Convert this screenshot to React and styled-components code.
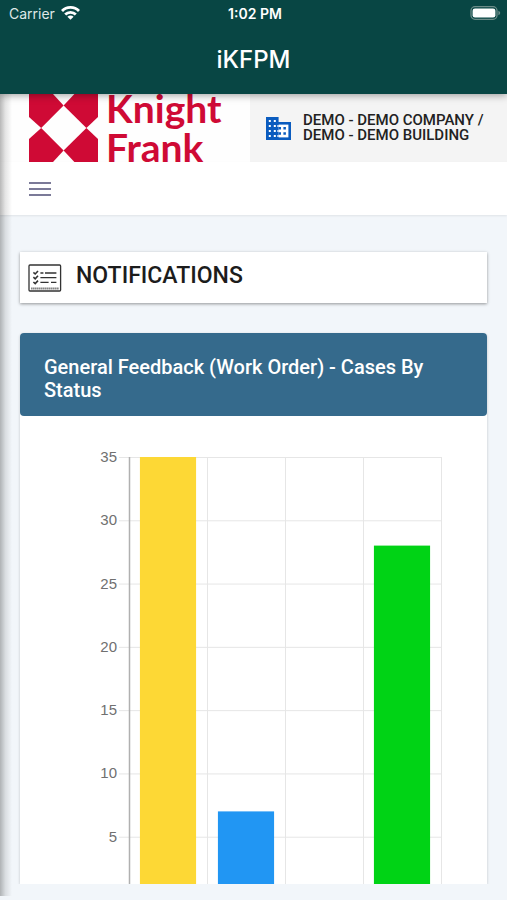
import React from 'react';
import styled, { createGlobalStyle } from 'styled-components';

const statusCases = [
  { id: 'open', value: 35, color: '#fdd835' },
  { id: 'in-progress', value: 7, color: '#2196f3' },
  { id: 'on-hold', value: 0, color: '#f44336' },
  { id: 'closed', value: 28, color: '#00d315' }
];

const ticks = [35, 30, 25, 20, 15, 10, 5];

// Chart geometry, in viewBox units
const CHART = { width: 419, height: 460, left: 85, right: 397, top: 16, bottom: 459, max: 35 };

const CasesChart = ({ data }) => {
  const step = (CHART.right - CHART.left) / data.length;
  const barWidth = step * 0.72;
  const yOf = (value) => CHART.bottom - (value / CHART.max) * (CHART.bottom - CHART.top);

  return (
    <ChartSvg viewBox={`0 0 ${CHART.width} ${CHART.height}`} role="img" aria-label="Cases by status">
      {ticks.map((tick) => (
        <g key={tick}>
          <line x1={CHART.left - 10} x2={CHART.right} y1={yOf(tick) + 0.5} y2={yOf(tick) + 0.5} stroke="#e6e6e6" />
          <text x={CHART.left - 12} y={yOf(tick) + 5} textAnchor="end">{tick}</text>
        </g>
      ))}
      {[...data, null].map((_, index) => (
        <line
          key={index}
          x1={CHART.left + step * index + 0.5}
          x2={CHART.left + step * index + 0.5}
          y1={CHART.top}
          y2={CHART.bottom}
          stroke={index === 0 ? '#b0b0b0' : '#e6e6e6'}
          strokeWidth={index === 0 ? 1.5 : 1}
        />
      ))}
      {data.map((item, index) => (
        <rect
          key={item.id}
          x={CHART.left + step * index + (step - barWidth) / 2}
          y={yOf(item.value)}
          width={barWidth}
          height={CHART.bottom - yOf(item.value)}
          fill={item.color}
        />
      ))}
    </ChartSvg>
  );
};

const WifiIcon = () => (
  <svg width="19" height="14" viewBox="0 0 19 14" fill="none" stroke="#fff" strokeWidth="2.8" aria-hidden="true">
    <path d="M1 5 C5.6 0.2 13.4 0.2 18 5" />
    <path d="M4.2 8.5 C7 5.6 12 5.6 14.8 8.5" />
    <path d="M9.5 13.8 L6.4 10.8 C8.2 9.2 10.8 9.2 12.6 10.8 Z" fill="#fff" stroke="none" />
  </svg>
);

const BatteryIcon = () => (
  <svg width="31" height="14" viewBox="0 0 31 14" aria-hidden="true">
    <rect x="1" y="0.7" width="26" height="12.6" rx="4" fill="none" stroke="#6b8c88" strokeWidth="1.3" />
    <rect x="2.6" y="2.4" width="22.8" height="9.2" rx="2.4" fill="#fff" />
    <path d="M28.4 4.8 C30.8 5.6 30.8 8.4 28.4 9.2 Z" fill="#6b8c88" />
  </svg>
);

const Emblem = () => (
  <svg width="69" height="68" viewBox="0 0 69 68" fill="#cf0a35" aria-hidden="true">
    <path d="M0 0 H24 L34.6 11.6 L12.2 34 L0 23 Z" />
    <path d="M69 0 H45.4 L34.6 11.6 L57.4 34 L69 23 Z" />
    <path d="M0 68 H24 L34.6 56.6 L12.2 34 L0 45 Z" />
    <path d="M69 68 H45.4 L34.6 56.6 L57.4 34 L69 45 Z" />
  </svg>
);

// Tower with two columns of windows and a lower annex
const BuildingIcon = () => (
  <svg width="25" height="23" viewBox="0 0 25 23" aria-hidden="true">
    <path d="M0 0 H12.6 V5 H25 V23 H0 Z" fill="#0b5cbf" />
    <path d="M12.6 7.6 H22.4 V20.4 H12.6 Z" fill="#fff" />
    <g fill="#fff">
      {[3, 8, 13, 18].map((y) => (
        <React.Fragment key={y}>
          <rect x="2.8" y={y} width="2" height="2" />
          <rect x="7.8" y={y} width="2" height="2" />
        </React.Fragment>
      ))}
      <path d="M11.4 8 H12.6 V10 H11.4 Z M11.4 13 H12.6 V15 H11.4 Z M11.4 18 H12.6 V20 H11.4 Z" />
    </g>
    <path d="M12.6 10 H15 V12.5 H12.6 Z M12.6 15.2 H15 V17.7 H12.6 Z M17.4 10 H19.9 V12.5 H17.4 Z M17.4 15.2 H19.9 V17.7 H17.4 Z" fill="#0b5cbf" />
  </svg>
);

const ChecklistIcon = () => (
  <svg width="34" height="28" viewBox="0 0 34 28" fill="none" stroke="#333" aria-hidden="true">
    <rect x="1" y="1" width="31.6" height="26" rx="1" strokeWidth="1.3" />
    <path d="M5.4 8.4 L7.2 10 L10 7 M5.4 13.2 L7.2 14.8 L10 11.8 M5.4 18 L7.2 19.6 L10 16.6" strokeWidth="1.6" />
    <path d="M12.4 9 H15.4 M17 9 H28.4 M12.4 13.7 H28.4 M12.4 18.4 H20.6 M23 18.4 H28.4" strokeWidth="1.3" />
    <path d="M3.4 24.4 H31" strokeWidth="2" strokeDasharray="1 1" />
  </svg>
);

const App = () => (
  <>
    <GlobalStyle />
    <Screen>
      <AppHeader>
        <StatusBar>
          <Carrier>Carrier <WifiIcon /></Carrier>
          <Clock>1:02 PM</Clock>
          <Battery><BatteryIcon /></Battery>
        </StatusBar>
        <AppTitle>iKFPM</AppTitle>
      </AppHeader>

      <Page>
        <BrandRow>
          <Brand>
            <Emblem />
            <Wordmark>Knight<br />Frank</Wordmark>
          </Brand>
          <Company>
            <BuildingIcon />
            <span>DEMO - DEMO COMPANY /<br />DEMO - DEMO BUILDING</span>
          </Company>
        </BrandRow>

        <MenuRow>
          <MenuButton type="button" aria-label="Menu">
            <span />
            <span />
            <span />
          </MenuButton>
        </MenuRow>

        <Content>
          <Notifications>
            <ChecklistIcon />
            <h2>NOTIFICATIONS</h2>
          </Notifications>

          <ChartCard>
            <ChartTitle>General Feedback (Work Order) - Cases By Status</ChartTitle>
            <ChartBody>
              <CasesChart data={statusCases} />
            </ChartBody>
          </ChartCard>
        </Content>
      </Page>
    </Screen>
  </>
);

const GlobalStyle = createGlobalStyle`
  * {
    box-sizing: border-box;
  }

  body {
    margin: 0;
    background: #f2f6fa;
    font-family: Roboto, "Liberation Sans", sans-serif;
  }

  h1, h2 {
    margin: 0;
    font-weight: 500;
  }

  svg {
    flex-shrink: 0;
  }
`;

const Screen = styled.div`
  display: flex;
  flex-direction: column;
  height: 100vh;
  overflow: hidden;
`;

const AppHeader = styled.header`
  position: relative;
  z-index: 2;
  height: 94px;
  flex-shrink: 0;
  background: #084644;
  color: #fff;
  font-family: Inter, sans-serif;
  box-shadow: 0 1px 8px rgba(0, 0, 0, 0.4);
`;

const StatusBar = styled.div`
  display: grid;
  grid-template-columns: 1fr auto 1fr;
  align-items: center;
  height: 26px;
  padding: 0 6px 0 9px;
  font-size: 14px;
`;

const Carrier = styled.div`
  display: flex;
  align-items: center;
  gap: 6px;
  color: #dfe8e7;
`;

const Clock = styled.div`
  font-weight: 600;
`;

const Battery = styled.div`
  display: flex;
  justify-content: flex-end;
`;

const AppTitle = styled.h1`
  line-height: 68px;
  font-size: 24px;
  text-align: center;
`;

const Page = styled.main`
  position: relative;
  display: flex;
  flex-direction: column;
  flex: 1;
  min-height: 0;

  /* edge shadow of the drawer */
  &::before {
    content: '';
    position: absolute;
    z-index: 1;
    top: 0;
    bottom: 4px;
    left: 0;
    width: 12px;
    background: linear-gradient(to right, rgba(0, 0, 0, 0.28), rgba(0, 0, 0, 0.1) 45%, transparent);
    pointer-events: none;
  }
`;

const BrandRow = styled.div`
  display: flex;
  height: 68px;
  flex-shrink: 0;
  overflow: hidden;
  background: #fefefe;
`;

const Brand = styled.div`
  display: flex;
  align-items: center;
  gap: 8px;
  width: 250px;
  padding-left: 29px;
`;

const Wordmark = styled.div`
  color: #cf0a35;
  font-family: Lato, sans-serif;
  font-size: 39px;
  font-weight: 700;
  line-height: 39px;
`;

const Company = styled.div`
  display: flex;
  flex: 1;
  align-items: center;
  gap: 12px;
  padding-left: 16px;
  background: #f4f4f4;
  color: #222;
  font-size: 15px;
  font-weight: 500;
  line-height: 15px;
  white-space: nowrap;
`;

const MenuRow = styled.nav`
  display: flex;
  align-items: center;
  height: 53px;
  flex-shrink: 0;
  padding-left: 29px;
  background: #fff;
  box-shadow: 0 1px 2px rgba(0, 0, 0, 0.08);
`;

const MenuButton = styled.button`
  display: flex;
  flex-direction: column;
  gap: 4px;
  width: 22px;
  padding: 0;
  border: none;
  background: none;
  cursor: pointer;

  span {
    height: 2px;
    background: #7b7a98;
  }
`;

const Content = styled.div`
  display: flex;
  flex-direction: column;
  flex: 1;
  gap: 30px;
  min-height: 0;
  padding: 37px 20px 16px;
`;

const Notifications = styled.section`
  display: flex;
  align-items: center;
  gap: 14px;
  height: 51px;
  flex-shrink: 0;
  padding-left: 8px;
  background: #fff;
  color: #1c1c1c;
  box-shadow: 0 1px 3px rgba(0, 0, 0, 0.4);

  h2 {
    padding-bottom: 4px;
    font-size: 23px;
    line-height: 28px;
  }
`;

const ChartCard = styled.section`
  display: flex;
  flex-direction: column;
  flex: 1;
  min-height: 0;
  background: #fff;
  border-radius: 4px 4px 0 0;
  box-shadow: 0 1px 3px rgba(0, 0, 0, 0.2);
  clip-path: inset(-4px -4px 0);
`;

const ChartTitle = styled.h2`
  padding: 23px 24px 14px;
  border-radius: 4px;
  background: #356a8c;
  color: #fff;
  font-size: 20px;
  line-height: 23px;
`;

const ChartBody = styled.div`
  flex: 1;
  min-height: 0;
  padding: 25px 24px 0;
  overflow: hidden;
`;

const ChartSvg = styled.svg`
  display: block;
  width: 100%;

  text {
    fill: #707070;
    font-family: "Liberation Sans", sans-serif;
    font-size: 15px;
  }
`;

export default App;
